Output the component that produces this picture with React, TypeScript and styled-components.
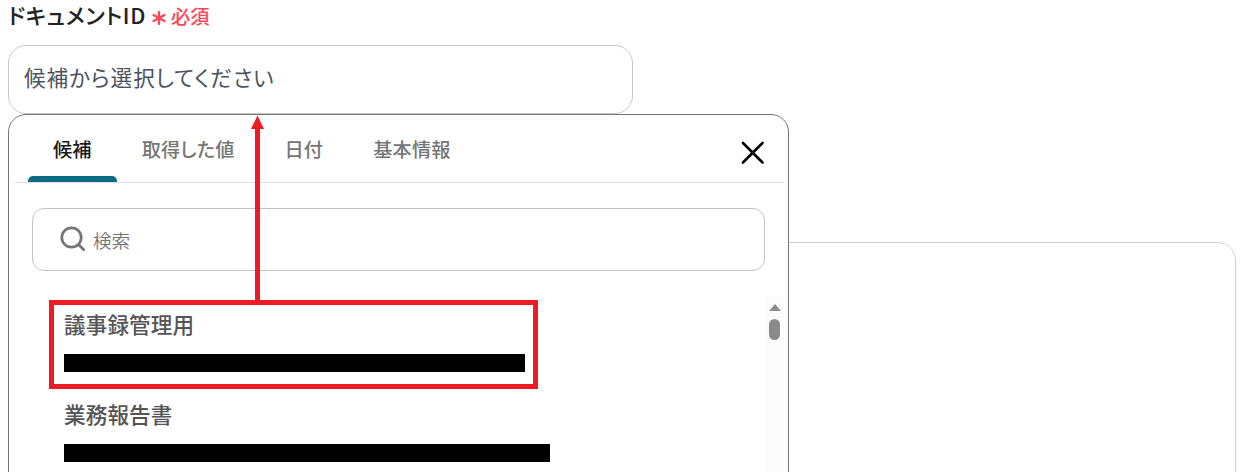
import React, { useState } from "react";
import styled, { createGlobalStyle } from "styled-components";

const tabs = ["候補", "取得した値", "日付", "基本情報"];

const documents = [
  { name: "議事録管理用", idWidth: 461 },
  { name: "業務報告書", idWidth: 486 }
];

export default function App() {
  const [activeTab, setActiveTab] = useState(tabs[0]);

  return (
    <Page>
      <GlobalStyle />
      <Field>
        <Label>
          ドキュメントID
          <Required>
            <AsteriskIcon viewBox="0 0 14 14">
              <path d="M7 1.2v11.6M1.6 4l10.8 6M12.4 4L1.6 10" />
            </AsteriskIcon>
            必須
          </Required>
        </Label>
        <SelectBox>候補から選択してください</SelectBox>
        <Popover>
          <TabBar>
            {tabs.map(t => (
              <Tab
                key={t}
                $active={t === activeTab}
                onClick={() => setActiveTab(t)}
              >
                {t}
              </Tab>
            ))}
            <CloseButton aria-label="close">
              <svg width="24" height="24" viewBox="0 0 24 24">
                <path d="M2 2l19.5 19.5M21.5 2L2 21.5" />
              </svg>
            </CloseButton>
          </TabBar>
          <SearchBox>
            <SearchIcon viewBox="0 0 26 26">
              <circle cx="11.5" cy="11.5" r="9.7" />
              <path d="M18.5 18.5l6 6" />
            </SearchIcon>
            <SearchInput placeholder="検索" />
          </SearchBox>
          <ListArea>
            <List>
              {documents.map(d => (
                <Item key={d.name}>
                  <ItemName>{d.name}</ItemName>
                  <Redacted style={{ width: d.idWidth }} />
                </Item>
              ))}
            </List>
            <ScrollTrack>
              <ScrollArrow />
              <ScrollThumb />
            </ScrollTrack>
          </ListArea>
        </Popover>
      </Field>
      <Panel />
      <Highlight />
      <Arrow viewBox="0 0 14 186">
        <path d="M6.5 0.5L13 14H9v172H4V14H0z" />
      </Arrow>
    </Page>
  );
}

const GlobalStyle = createGlobalStyle`
  * {
    box-sizing: border-box;
  }
  body {
    margin: 0;
    background: white;
    font-family: "Noto Sans CJK JP", sans-serif;
    font-feature-settings: "palt";
  }
`;

const Page = styled.main`
  position: relative;
  width: 1242px;
  height: 472px;
  overflow: hidden;
`;

const Field = styled.div`
  position: relative;
  padding: 0 8px;
  height: 242px;
`;

const Label = styled.div`
  display: flex;
  align-items: center;
  height: 45px;
  padding-bottom: 16px;
  font-size: 21.6px;
  font-weight: 500;
  letter-spacing: 0.75px;
  -webkit-text-stroke: 0.1px;
  color: #222;
`;

const Required = styled.span`
  display: flex;
  align-items: center;
  gap: 5px;
  margin-left: 6px;
  padding-top: 3px;
  font-size: 19.2px;
  letter-spacing: 0;
  color: #ff475a;
`;

const AsteriskIcon = styled.svg`
  width: 14px;
  height: 14px;
  margin-top: 3px;
  fill: none;
  stroke: #ff475a;
  stroke-width: 2.4;
  stroke-linecap: round;
`;

const SelectBox = styled.div`
  display: flex;
  align-items: center;
  width: 625px;
  height: 69px;
  padding: 0 15px 6px;
  border: 1px solid #c8c8c8;
  border-radius: 18px;
  font-size: 21.6px;
  letter-spacing: 0.95px;
  color: #4b535d;
`;

const Popover = styled.div`
  position: absolute;
  z-index: 1;
  top: 114px;
  left: 8px;
  width: 781px;
  height: 400px;
  padding: 0 4px 0 5px;
  border: 1px solid #757575;
  border-radius: 18px;
  background: white;
`;

const TabBar = styled.div`
  display: flex;
  height: 68px;
  padding-left: 14px;
  border-bottom: 1px solid #e2e2e2;
`;

interface TabProps {
  $active: boolean;
}
const Tab = styled.button<TabProps>`
  display: flex;
  align-items: center;
  height: 67px;
  padding: 7px 25px 0;
  border: none;
  border-bottom: 6px solid transparent;
  background: none;
  font: inherit;
  font-size: 19.2px;
  font-weight: 500;
  font-feature-settings: "palt";
  letter-spacing: 0.15px;
  color: ${({ $active }) => ($active ? "#1a1a1a" : "#757575")};
  position: relative;
  cursor: pointer;

  &::after {
    content: "";
    display: ${({ $active }) => ($active ? "block" : "none")};
    position: absolute;
    left: 0;
    right: 0;
    bottom: -6px;
    height: 6px;
    border-radius: 5px 5px 0 0;
    background: #0b6b83;
  }
`;

const CloseButton = styled.button`
  display: flex;
  align-items: center;
  margin-left: auto;
  padding: 8px 19px 0 0;
  border: none;
  background: none;
  cursor: pointer;

  path {
    fill: none;
    stroke: black;
    stroke-width: 2.6;
    stroke-linecap: round;
  }
`;

const SearchBox = styled.label`
  display: flex;
  align-items: center;
  width: 733px;
  height: 63px;
  margin: 25px 0 0 18px;
  padding-left: 27px;
  border: 1px solid #c4c4c4;
  border-radius: 12px;
`;

const SearchIcon = styled.svg`
  width: 26px;
  height: 26px;
  flex: none;
  margin: 0 7px 2px 0;
  fill: none;
  stroke: #757575;
  stroke-width: 2.7;
`;

const SearchInput = styled.input`
  flex: 1;
  padding: 0;
  border: none;
  outline: none;
  background: none;
  font: inherit;
  font-size: 18.6px;
  font-weight: 350;

  &::placeholder {
    color: #757575;
  }
`;

const ListArea = styled.div`
  display: flex;
  justify-content: space-between;
  height: 220px;
  margin-top: 25px;
`;

const List = styled.div`
  padding: 13px 0 0 50px;
`;

const Item = styled.div`
  height: 90px;
`;

const ItemName = styled.div`
  height: 45px;
  line-height: 30px;
  font-size: 21.6px;
  font-weight: 500;
  letter-spacing: 0.1px;
  color: #555;
`;

const Redacted = styled.div`
  height: 18px;
  background: black;
`;

const ScrollTrack = styled.div`
  display: flex;
  flex-direction: column;
  align-items: center;
  gap: 8px;
  width: 19px;
  padding-top: 8px;
  background: #fcfcfc;
`;

const ScrollArrow = styled.div`
  border: 6.5px solid transparent;
  border-top: none;
  border-bottom: 7px solid #8b8b8b;
`;

const ScrollThumb = styled.div`
  width: 11px;
  height: 21px;
  border-radius: 6px;
  background: #8b8b8b;
`;

const Panel = styled.section`
  width: 1228px;
  height: 300px;
  margin-left: 8px;
  border: 1px solid #cdd3de;
  border-radius: 18px;
`;

const Highlight = styled.div`
  position: absolute;
  z-index: 2;
  top: 300px;
  left: 49px;
  width: 489px;
  height: 89px;
  border: 5px solid #ed1c24;
`;

const Arrow = styled.svg`
  position: absolute;
  z-index: 2;
  top: 115px;
  left: 251px;
  width: 14px;
  height: 186px;
  fill: #ed1c24;
`;
